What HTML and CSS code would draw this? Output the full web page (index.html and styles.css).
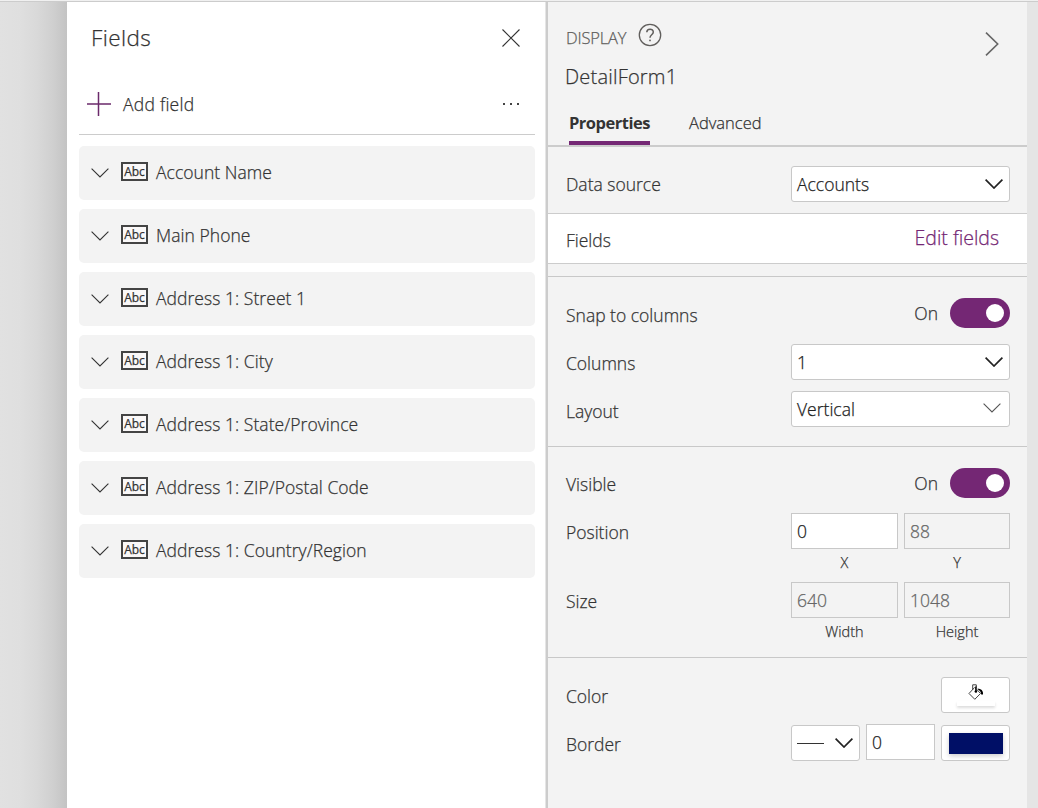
FILE: index.html
```html
<!DOCTYPE html>
<html lang="en">
<head>
<meta charset="utf-8">
<title>Fields</title>
<link rel="stylesheet" href="styles.css">
</head>
<body>
<svg class="defs" width="0" height="0">
  <symbol id="chev" viewBox="0 0 18 10"><path d="M.6.6 9 9 17.4.6" fill="none" stroke="currentColor"/></symbol>
</svg>
<div class="topline"></div>
<div class="app">
  <div class="canvas"></div>
  <section class="fields">
    <header class="fields-head">
      <h1 class="title">Fields</h1>
      <svg class="close" width="18" height="18" viewBox="0 0 18 18"><path d="M.5.5l17 17M17.5.5l-17 17" fill="none" stroke="#333" stroke-width="1.1"/></svg>
    </header>
    <div class="add">
      <svg width="24" height="24" viewBox="0 0 24 24"><path d="M0 12h24M11.5 0v24" fill="none" stroke="#6b2a6b" stroke-width="1.5"/></svg>
      <span class="add-label">Add field</span>
      <svg class="dots" width="18" height="4" viewBox="0 0 18 4"><path d="M1 1h2v2H1zM8 1h2v2H8zM15 1h2v2h-2z" fill="#444"/></svg>
    </div>
    <div class="list">
      <div class="card"><svg class="cv"><use href="#chev"/></svg><span class="abc">Abc</span><span class="name">Account Name</span></div>
      <div class="card"><svg class="cv"><use href="#chev"/></svg><span class="abc">Abc</span><span class="name">Main Phone</span></div>
      <div class="card"><svg class="cv"><use href="#chev"/></svg><span class="abc">Abc</span><span class="name">Address 1: Street 1</span></div>
      <div class="card"><svg class="cv"><use href="#chev"/></svg><span class="abc">Abc</span><span class="name">Address 1: City</span></div>
      <div class="card"><svg class="cv"><use href="#chev"/></svg><span class="abc">Abc</span><span class="name">Address 1: State/Province</span></div>
      <div class="card"><svg class="cv"><use href="#chev"/></svg><span class="abc">Abc</span><span class="name">Address 1: ZIP/Postal Code</span></div>
      <div class="card"><svg class="cv"><use href="#chev"/></svg><span class="abc">Abc</span><span class="name">Address 1: Country/Region</span></div>
    </div>
  </section>
  <section class="props">
    <header class="props-head">
      <div class="head-row">
        <div>
          <div class="kind"><span class="display">DISPLAY</span>
            <svg width="24" height="24" viewBox="0 0 24 24" fill="none" stroke="#605e5c" stroke-width="1.3"><circle cx="12" cy="12" r="10.7"/><path d="M8.8 9.3c0-4 6.5-4 6.5-.2 0 2.7-3.3 2.7-3.3 5.6" stroke-width="1.5"/><circle cx="12" cy="17.4" r=".9" fill="#605e5c" stroke="none"/></svg>
          </div>
          <div class="form-name">DetailForm1</div>
        </div>
        <svg class="next" width="14" height="24" viewBox="0 0 14 24"><path d="M1 .7 12.7 12 1 23.3" fill="none" stroke="#666" stroke-width="1.6"/></svg>
      </div>
      <nav class="tabs"><span class="tab active">Properties</span><span class="tab">Advanced</span></nav>
    </header>
    <div class="row source"><span class="label">Data source</span><div class="select">Accounts<svg class="cv bold"><use href="#chev"/></svg></div></div>
    <div class="row edit"><span class="label">Fields</span><a class="link">Edit fields</a></div>
    <div class="group g1">
      <div class="row toggle-row"><span class="label">Snap to columns</span><span class="on">On</span><span class="toggle"></span></div>
      <div class="row columns"><span class="label">Columns</span><div class="select">1<svg class="cv bold"><use href="#chev"/></svg></div></div>
      <div class="row layout"><span class="label">Layout</span><div class="select soft">Vertical<svg class="cv"><use href="#chev"/></svg></div></div>
    </div>
    <div class="group g2">
      <div class="row toggle-row"><span class="label">Visible</span><span class="on">On</span><span class="toggle"></span></div>
      <div class="row pair"><span class="label">Position</span>
        <div class="cell x"><div class="input">0</div><span class="cap">X</span></div>
        <div class="cell"><div class="input off">88</div><span class="cap">Y</span></div></div>
      <div class="row pair"><span class="label">Size</span>
        <div class="cell x"><div class="input off">640</div><span class="cap">Width</span></div>
        <div class="cell"><div class="input off">1048</div><span class="cap">Height</span></div></div>
    </div>
    <div class="group g3">
      <div class="row"><span class="label">Color</span>
        <div class="swatch fill"><svg width="16" height="17" viewBox="0 0 16 17"><path d="M6.5 3.5 1 9.500 6.800 15.300l5.700-5.800L7 3.500M4.700 6V.8h3.600v3" fill="none" stroke="#444"/><path d="M7.900 2.500v5" stroke="#000" stroke-width="1.4"/><circle cx="7.900" cy="7.500" r="1.300" fill="#000"/><path d="M9.500 4.500c3.500.3 6 2 5.500 6h-1.800C13 8 12.300 7 10.500 6z" fill="#000"/></svg><span class="none"></span></div></div>
      <div class="row border-row"><span class="label">Border</span>
        <div class="select line"><span class="stroke"></span><svg class="cv bold"><use href="#chev"/></svg></div>
        <div class="input width">0</div>
        <div class="swatch"><span class="navy"></span></div></div>
    </div>
  </section>
  <div class="edge"></div>
</div>
</body>
</html>
```
FILE: styles.css
```css
* { box-sizing: border-box; }
body { margin: 0; width: 1038px; height: 808px; overflow: hidden; background: #e5e5e5; color: #333; font: 17.5px/24px "Open Sans", "Noto Sans", sans-serif; font-weight: 300; white-space: nowrap; -webkit-text-stroke: .25px currentColor; }
svg { display: block; flex: none; }
.defs { position: absolute; }
.topline { height: 2px; background: #f0f0f0; border-bottom: 1px solid #ccc; }
.app { display: flex; height: 806px; }
.canvas { width: 67px; background: linear-gradient(90deg, #e1e1e1 0, #dfdfdf 30%, #d9d9d9 55%, #cfcfcf 80%, #c3c3c3 100%); }
.fields { width: 481px; background: #fff; border-right: 2px solid #ccc; padding: 0 11px 0 12px; box-shadow: inset -1px 0 #e5e5e5; }
.fields-head { height: 72px; display: flex; justify-content: space-between; padding: 0 15px 0 12px; align-items: center; }
.title { margin: 0; font-size: 22.5px; font-weight: 300; letter-spacing: .4px; }
.add { height: 61px; border-bottom: 1px solid #ccc; display: flex; align-items: center; padding: 0 15px 0 8px; }
.add-label { margin-left: 12px; letter-spacing: .25px; }
.dots { margin-left: auto; }
.list { padding-top: 11px; display: grid; gap: 9px; }
.card { height: 54px; background: #f3f3f3; border-radius: 5px; display: flex; align-items: center; padding-left: 12px; }
.name { padding-bottom: 2px; letter-spacing: .05px; }
.cv { width: 18px; height: 10px; stroke-width: 1.1; }
.bold { stroke-width: 1.7; }
.abc { width: 27px; height: 19px; margin: -3px 8px 0 12px; border: 2px solid #444; background: #faf8f8; font-size: 12px; line-height: 15px; font-weight: 400; display: flex; justify-content: center; }
.props { width: 479px; background: #f3f3f3; }
.props-head { height: 145px; border-bottom: 2px solid #ccc; padding: 21px 28px 0 17px; }
.head-row { display: flex; justify-content: space-between; height: 84px; }
.kind { display: flex; gap: 12px; color: #605e5c; }
.display { padding: 3px 0 0 1px; font-size: 16.5px; letter-spacing: -.2px; }
.form-name { font-size: 20px; padding-top: 15px; letter-spacing: .2px; }
.next { margin-top: 9px; }
.tabs { display: flex; gap: 39px; padding-left: 4px; height: 38px; line-height: 32px; font-size: 16.5px; }
.tab { height: 38px; }
.active { width: 81px; font-weight: 700; letter-spacing: -.5px; border-bottom: 4px solid #742774; -webkit-text-stroke: 0; }
.row { display: flex; padding: 0 17px 0 18px; }
.label { margin-right: auto; padding-top: 7px; }
.source { padding-top: 19px; height: 66px; }
.source .label { padding-top: 6px; }
.select, .input, .swatch { height: 36px; border: 1px solid #c8c8c8; background: #fff; color: #222; }
.select { width: 219px; border-radius: 3px; display: flex; align-items: center; justify-content: space-between; padding: 0 6px 0 5px; }
.soft .cv { color: #555; margin: -2px 2px 0 0; }
.edit { height: 51px; border: solid #ccc; border-width: 1px 0; background: #fff; align-items: center; padding-right: 28px; }
.edit .label { padding-top: 3px; }
.link { color: #742774; font-size: 19.5px; padding-bottom: 2px; }
.group { border-top: 1px solid #c8c8c8; }
.g1 { margin-top: 12px; height: 170px; padding-top: 21px; }
.g2 { height: 211px; padding-top: 21px; }
.g3 { padding-top: 19px; }
.toggle-row { height: 46px; }
.toggle-row .label { padding-top: 5px; }
.on { padding-top: 3px; margin-right: 12px; }
.toggle { width: 60px; height: 30px; border-radius: 15px; background: #742774; display: flex; justify-content: flex-end; padding: 6px; }
.g2 .toggle-row { height: 45px; }
.g2 .toggle-row .label { padding-top: 4px; }
.toggle::after { content: ""; width: 18px; height: 18px; background: #fff; border-radius: 50%; }
.g1 .columns { height: 47px; }
.layout .label { padding-top: 8px; }
.pair { height: 69px; }
.cell { width: 106px; }
.x { width: 107px; margin-right: 6px; }
.input { padding: 5px; }
.off { background: #f3f3f3; color: #666; }
.cap { display: block; text-align: center; font-size: 14.5px; line-height: 28px; }
.swatch { width: 69px; border-radius: 3px; padding: 7px 6px 7px 7px; }
.fill { display: flex; flex-direction: column; align-items: center; padding: 6px 0 0; }
.none { width: 38px; height: 5px; background: #fff; box-shadow: 0 2px 3px #ddd; }
.navy { display: block; width: 54px; height: 21px; background: #000f66; box-shadow: 0 2px 5px #ccc; }
.border-row { padding-top: 12px; }
.line { width: 69px; margin-right: 6px; }
.width { width: 69px; margin: -1px 6px 0 0; }
.stroke { width: 27px; height: 1px; background: #333; }
.edge { width: 11px; background: #e5e5e5; }
```
